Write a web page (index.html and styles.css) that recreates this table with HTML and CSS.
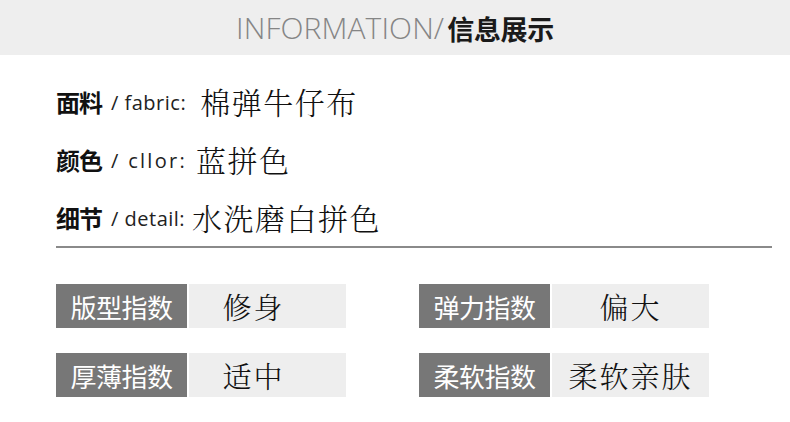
FILE: index.html
```html
<!DOCTYPE html>
<html lang="zh">
<head>
<meta charset="utf-8">
<title>INFORMATION / 信息展示</title>
<link rel="stylesheet" href="styles.css">
</head>
<body>
<header class="header">
  <span class="header-en">INFORMATION/</span>
  <span class="header-cn">信息展示</span>
</header>
<section class="info">
  <div class="info-row">
    <span class="info-key">面料</span>
    <span class="info-sub">/ fabric:</span>
    <span class="info-val">棉弹牛仔布</span>
  </div>
  <div class="info-row">
    <span class="info-key">颜色</span>
    <span class="info-sub info-sub-wide">/ cllor:</span>
    <span class="info-val">蓝拼色</span>
  </div>
  <div class="info-row">
    <span class="info-key">细节</span>
    <span class="info-sub info-sub-tight">/ detail:</span>
    <span class="info-val">水洗磨白拼色</span>
  </div>
  <div class="divider"></div>
</section>
<section class="specs">
  <div class="spec">
    <div class="spec-label">版型指数</div>
    <div class="spec-val spec-val-left">修身</div>
  </div>
  <div class="spec">
    <div class="spec-label">弹力指数</div>
    <div class="spec-val">偏大</div>
  </div>
  <div class="spec">
    <div class="spec-label">厚薄指数</div>
    <div class="spec-val spec-val-left">适中</div>
  </div>
  <div class="spec">
    <div class="spec-label">柔软指数</div>
    <div class="spec-val">柔软亲肤</div>
  </div>
</section>
</body>
</html>
```

FILE: styles.css
```css
html, body {
  margin: 0;
  padding: 0;
  background: #ffffff;
}
body {
  width: 790px;
  height: 422px;
  overflow: hidden;
  font-family: "Noto Sans CJK SC", "Noto Sans", sans-serif;
  color: #111;
}
.header {
  height: 55px;
  background: #eeeeee;
  display: flex;
  align-items: center;
  justify-content: center;
  gap: 3px;
}
.header-en {
  font-family: "Open Sans", "Noto Sans", sans-serif;
  font-weight: 300;
  font-size: 30px;
  letter-spacing: 0.1px;
  color: #858585;
  line-height: 1;
}
.header-cn {
  font-weight: 700;
  font-size: 27px;
  letter-spacing: -0.3px;
  color: #1a1a1a;
  line-height: 1;
  margin-top: 1px;
}
.info {
  padding: 17px 18px 0 56px;
}
.info-row {
  height: 58px;
  display: flex;
  align-items: center;
}
.info-key {
  font-weight: 700;
  font-size: 24px;
  color: #111;
  letter-spacing: -1px;
}
.info-sub {
  font-family: "Open Sans", "Noto Sans", sans-serif;
  font-size: 20px;
  letter-spacing: 0.5px;
  color: #222;
  margin-left: 9px;
  margin-right: 14px;
  margin-top: 3px;
}
.info-sub-wide {
  letter-spacing: 2.3px;
  margin-right: 9px;
}
.info-sub-tight {
  margin-right: 7px;
}
.info-val {
  font-family: "Noto Serif CJK SC", "Noto Sans CJK SC", serif;
  font-weight: 300;
  font-size: 30px;
  letter-spacing: 1.5px;
  color: #111;
}
.divider {
  height: 2px;
  background: #8a8a8a;
}
.specs {
  margin-top: 36px;
  padding-left: 56px;
  display: grid;
  grid-template-columns: 290px 290px;
  column-gap: 73px;
  row-gap: 25px;
}
.spec {
  display: flex;
  gap: 2px;
  height: 44px;
}
.spec-label {
  width: 131px;
  background: #777777;
  color: #ffffff;
  font-size: 26px;
  letter-spacing: -0.5px;
  display: flex;
  align-items: center;
  justify-content: center;
}
.spec-val {
  flex: 1;
  background: #eeeeee;
  display: flex;
  align-items: center;
  justify-content: center;
  font-family: "Noto Serif CJK SC", "Noto Sans CJK SC", serif;
  font-weight: 300;
  font-size: 29px;
  letter-spacing: 2px;
  color: #111;
}
.spec-val-left {
  padding-right: 28px;
}
```
